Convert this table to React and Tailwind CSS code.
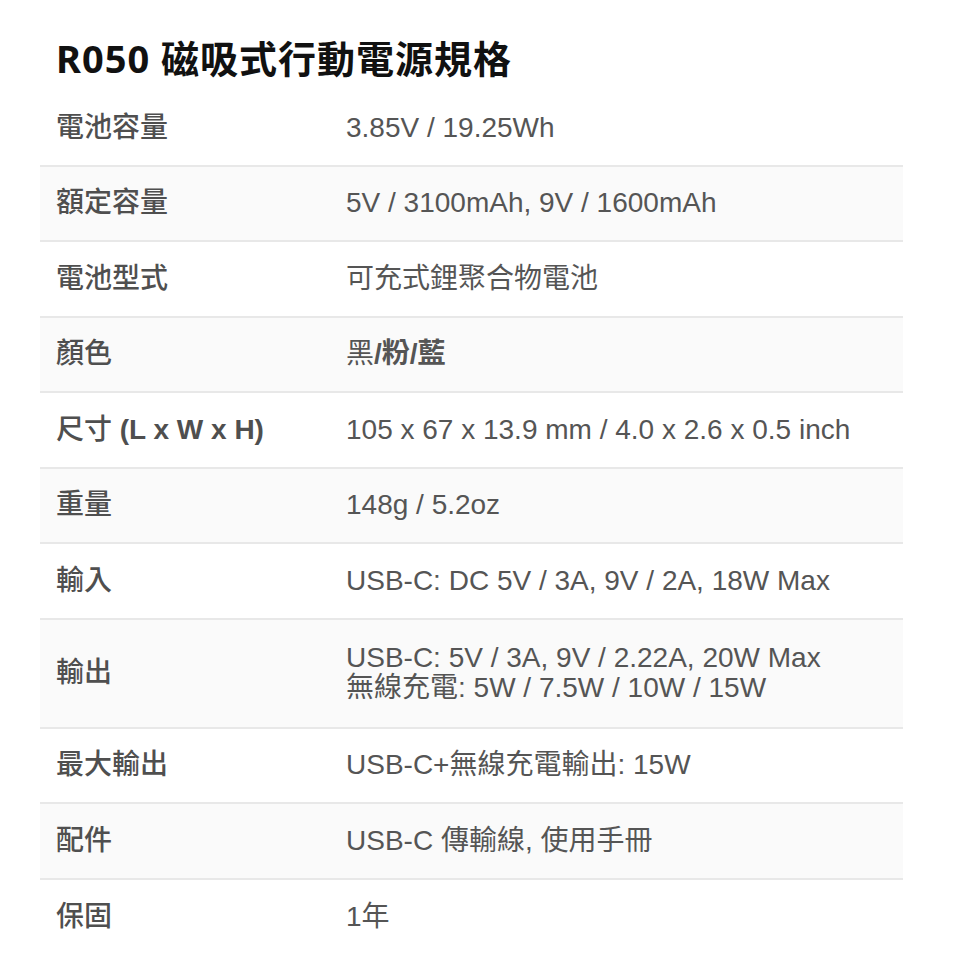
const specs = [
  { label: '電池容量', value: '3.85V / 19.25Wh' },
  { label: '額定容量', value: '5V / 3100mAh, 9V / 1600mAh' },
  { label: '電池型式', value: '可充式鋰聚合物電池' },
  {
    label: '顏色',
    value: (
      <>
        黑<span className="font-semibold">/粉/藍</span>
      </>
    ),
  },
  {
    label: (
      <>
        尺寸 <span className="font-bold">(L x W x H)</span>
      </>
    ),
    value: '105 x 67 x 13.9 mm / 4.0 x 2.6 x 0.5 inch',
  },
  { label: '重量', value: '148g / 5.2oz' },
  { label: '輸入', value: 'USB-C: DC 5V / 3A, 9V / 2A, 18W Max' },
  {
    label: '輸出',
    value: (
      <>
        <div>USB-C: 5V / 3A, 9V / 2.22A, 20W Max</div>
        <div>無線充電: 5W / 7.5W / 10W / 15W</div>
      </>
    ),
    tall: true,
  },
  { label: '最大輸出', value: 'USB-C+無線充電輸出: 15W' },
  { label: '配件', value: 'USB-C 傳輸線, 使用手冊' },
  { label: '保固', value: '1年', last: true },
];

export default function App() {
  return (
    <div className="min-h-screen bg-white font-['Liberation_Sans','Noto_Sans_CJK_TC',sans-serif]">
      <div className="w-[863px] ml-[40px] pt-[32px]">
        <h1 className="pl-4 text-[38px] leading-[52px] font-bold tracking-[1px] text-[#111] font-['Noto_Sans','Noto_Sans_CJK_TC',sans-serif]">
          R050 磁吸式行動電源規格
        </h1>
        <div className="mt-[7px]">
          {specs.map((row, i) => (
            <div
              key={i}
              className={`flex items-center ${row.tall ? 'h-[109px]' : 'h-[75.5px]'} ${row.last ? '' : 'border-b-2 border-[#e8e8e8]'} ${i % 2 === 1 ? 'bg-[#fafafa]' : 'bg-white'}`}
            >
              <div className="w-[306px] shrink-0 pl-4 text-[28px] leading-[34px] font-medium text-[#4f4f4f]">
                {row.label}
              </div>
              <div className="flex-1 text-[28px] leading-[30px] text-[#555]">
                {row.value}
              </div>
            </div>
          ))}
        </div>
      </div>
    </div>
  );
}
